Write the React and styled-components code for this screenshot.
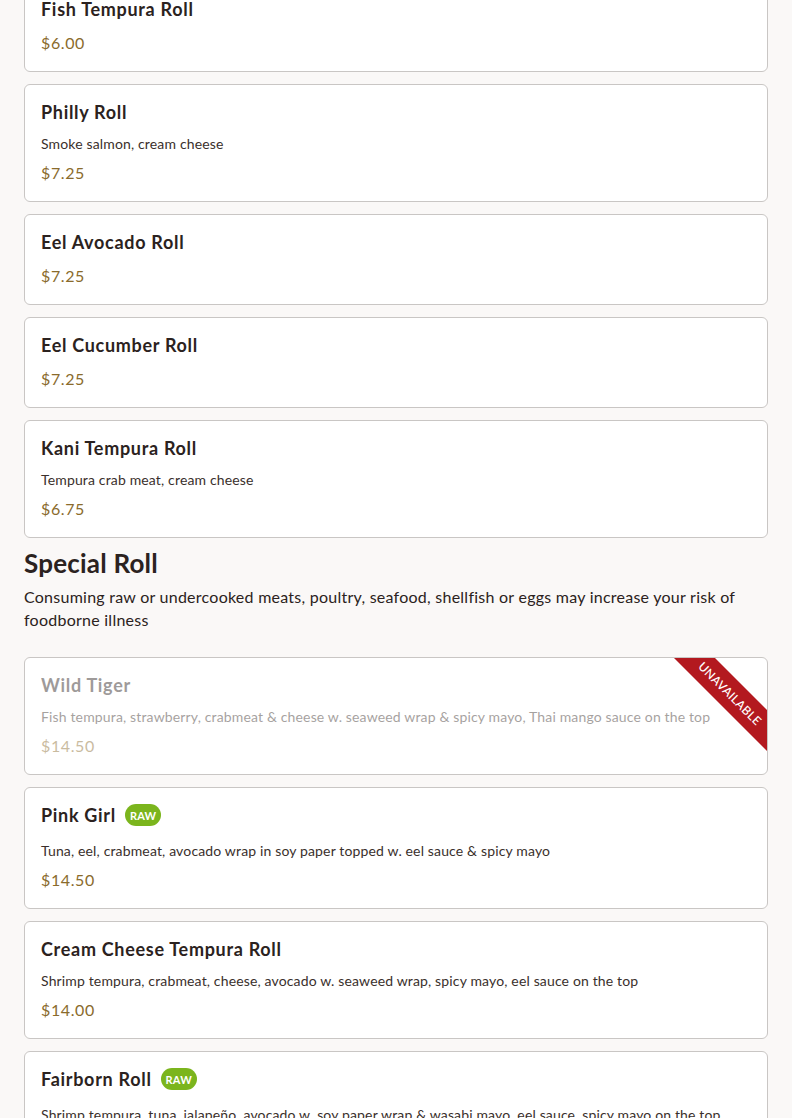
import React from "react";
import { styled, createGlobalStyle } from "styled-components";

const GlobalStyle = createGlobalStyle`
  html, body {
    margin: 0;
    padding: 0;
    background: #faf8f7;
  }
  body {
    font-family: "Lato", "Noto Sans", sans-serif;
    color: #2b2220;
  }
`;

const Page = styled.div`
  padding: 0 24px;
  margin-top: -19px;
  display: flex;
  flex-direction: column;
`;

const List = styled.div`
  display: flex;
  flex-direction: column;
  gap: 12px;
`;

const SectionHead = styled.div`
  margin: 10px 0 26px;
`;

const SectionTitle = styled.h2`
  margin: 0 0 7px;
  font-size: 26px;
  line-height: 30px;
  font-weight: 700;
  letter-spacing: 0.2px;
  color: #2b2220;
`;

const SectionNote = styled.p`
  margin: 0;
  font-size: 16px;
  line-height: 23px;
  letter-spacing: 0.25px;
  color: #2b2220;
`;

const Card = styled.div`
  position: relative;
  overflow: hidden;
  background: #fff;
  border: 1px solid #c9c6c4;
  border-radius: 6px;
  padding: 16px;
`;

const Body = styled.div`
  display: flex;
  flex-direction: column;
  opacity: ${(p) => (p.$off ? 0.45 : 1)};
`;

const TitleRow = styled.div`
  display: flex;
  align-items: center;
  gap: 9px;
  height: 22px;
  margin-bottom: ${(p) => (p.$badge ? "15px" : "11px")};
`;

const Title = styled.h3`
  margin: 0;
  font-size: 18px;
  line-height: 22px;
  font-weight: 700;
  letter-spacing: 0.7px;
  color: #2b2220;
`;

const Badge = styled.span`
  display: inline-flex;
  align-items: center;
  justify-content: center;
  height: 22px;
  padding: 0 5px;
  border-radius: 11px;
  background: #7bb51d;
  color: #fff;
  font-size: 11px;
  font-weight: 700;
  letter-spacing: 0.2px;
`;

const Desc = styled.p`
  margin: 0 0 7px;
  font-size: 14px;
  line-height: 20px;
  letter-spacing: 0.15px;
  color: #3a302c;
`;

const Price = styled.div`
  font-size: 16px;
  line-height: 24px;
  letter-spacing: 0.6px;
  color: #8a6b2c;
`;

const Ribbon = styled.div`
  position: absolute;
  top: 21px;
  right: -63px;
  width: 200px;
  height: 29px;
  display: flex;
  align-items: center;
  justify-content: center;
  background: #b3191f;
  color: #fff;
  font-size: 12px;
  font-weight: 500;
  letter-spacing: 0.3px;
  transform: rotate(45deg);
`;

const rolls = [
  { name: "Fish Tempura Roll", price: "$6.00" },
  { name: "Philly Roll", desc: "Smoke salmon, cream cheese", price: "$7.25" },
  { name: "Eel Avocado Roll", price: "$7.25" },
  { name: "Eel Cucumber Roll", price: "$7.25" },
  { name: "Kani Tempura Roll", desc: "Tempura crab meat, cream cheese", price: "$6.75" },
];

const specials = [
  {
    name: "Wild Tiger",
    desc: "Fish tempura, strawberry, crabmeat & cheese w. seaweed wrap & spicy mayo, Thai mango sauce on the top",
    price: "$14.50",
    off: true,
  },
  {
    name: "Pink Girl",
    raw: true,
    desc: "Tuna, eel, crabmeat, avocado wrap in soy paper topped w. eel sauce & spicy mayo",
    price: "$14.50",
  },
  {
    name: "Cream Cheese Tempura Roll",
    desc: "Shrimp tempura, crabmeat, cheese, avocado w. seaweed wrap, spicy mayo, eel sauce on the top",
    price: "$14.00",
  },
  {
    name: "Fairborn Roll",
    raw: true,
    desc: "Shrimp tempura, tuna, jalapeño, avocado w. soy paper wrap & wasabi mayo, eel sauce, spicy mayo on the top",
    price: "$14.50",
  },
];

const MenuCard = ({ item }) => (
  <Card>
    <Body $off={item.off}>
      <TitleRow $badge={item.raw}>
        <Title>{item.name}</Title>
        {item.raw && <Badge>RAW</Badge>}
      </TitleRow>
      {item.desc && <Desc>{item.desc}</Desc>}
      <Price>{item.price}</Price>
    </Body>
    {item.off && <Ribbon>UNAVAILABLE</Ribbon>}
  </Card>
);

export default function App() {
  return (
    <>
      <GlobalStyle />
      <Page>
        <List>
          {rolls.map((r) => (
            <MenuCard key={r.name} item={r} />
          ))}
        </List>
        <SectionHead>
          <SectionTitle>Special Roll</SectionTitle>
          <SectionNote>
            Consuming raw or undercooked meats, poultry, seafood, shellfish or eggs may
            increase your risk of foodborne illness
          </SectionNote>
        </SectionHead>
        <List>
          {specials.map((r) => (
            <MenuCard key={r.name} item={r} />
          ))}
        </List>
      </Page>
    </>
  );
}
